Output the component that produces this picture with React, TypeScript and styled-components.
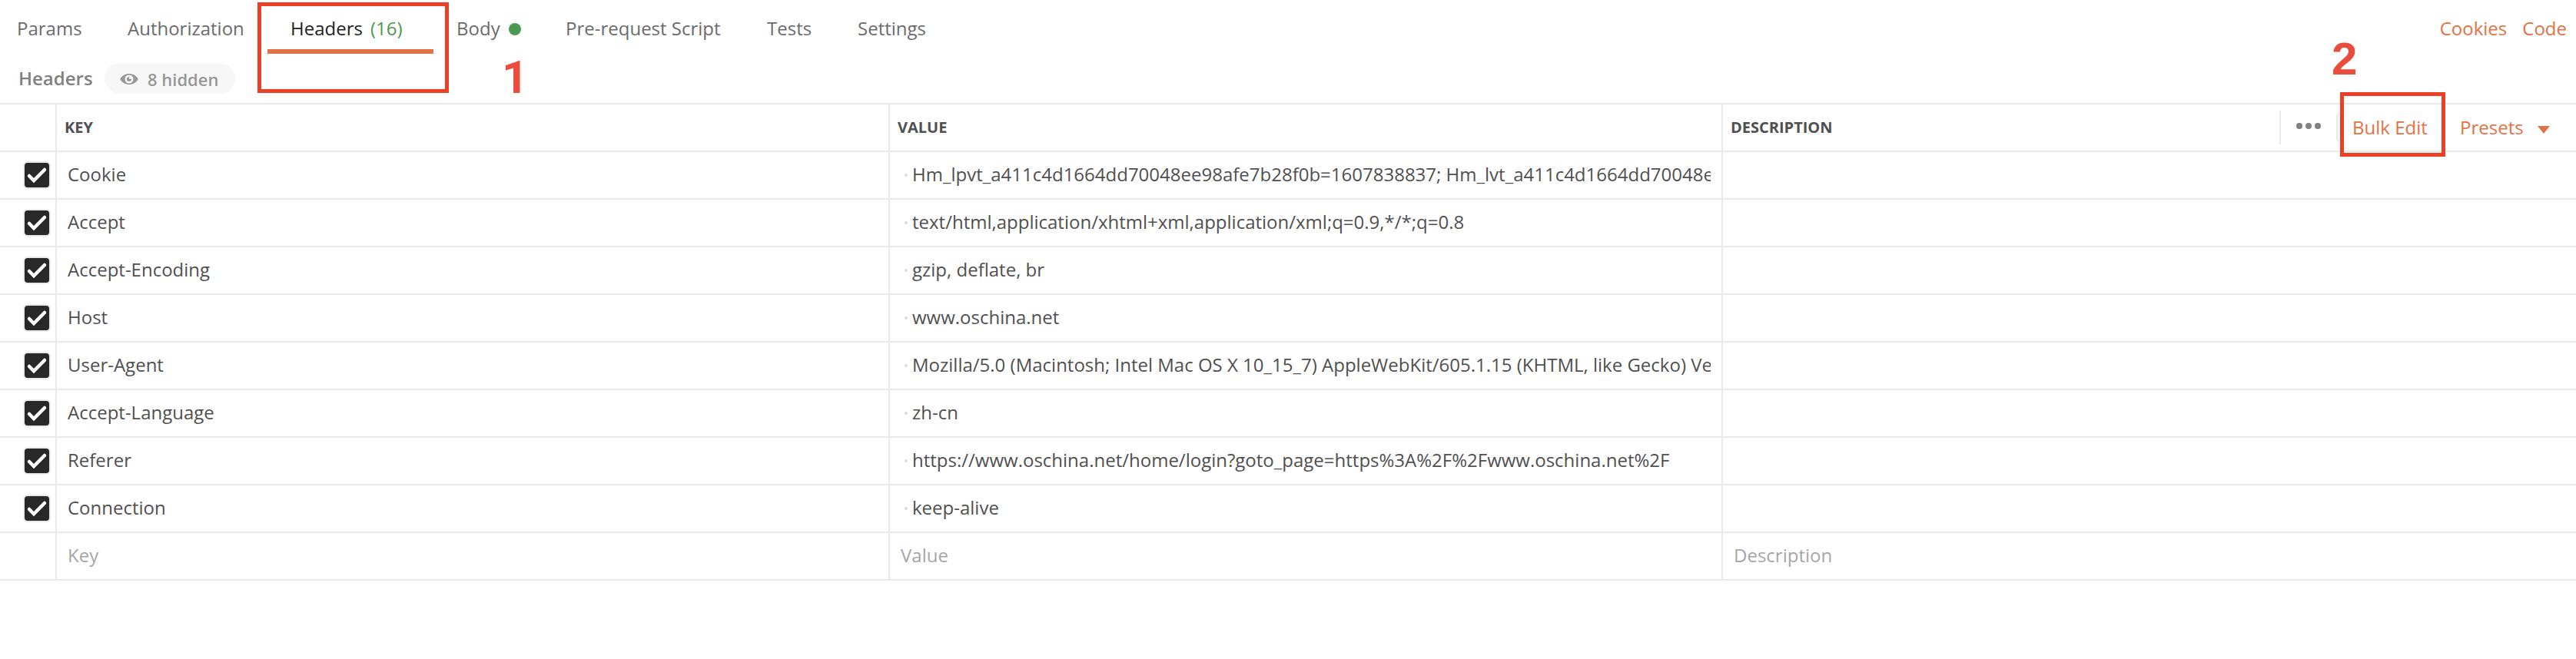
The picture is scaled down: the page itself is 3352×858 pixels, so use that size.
import React from 'react';
import styled, { createGlobalStyle } from 'styled-components';

const LINE = '#e9e9e9';
const ORANGE = '#e27245';

const GlobalStyle = createGlobalStyle`
  *, *::before, *::after { box-sizing: border-box; }
  body {
    margin: 0;
    background: #fff;
    color: #505050;
    font-family: "Open Sans", sans-serif;
    font-size: 24px;
    line-height: 34px;
  }
`;

const Page = styled.main`
  position: relative;
  width: 3352px;
  height: 858px;
  overflow: hidden;
  background: #fff;
`;

const TopBar = styled.nav`
  display: flex;
  justify-content: space-between;
  height: 70px;
`;

const TabList = styled.div`
  display: flex;
  padding-left: 22px;
`;

const Tab = styled.div<{ $width: number; $inset?: number; $active?: boolean }>`
  display: flex;
  width: ${p => p.$width}px;
  height: 70px;
  padding: 20px 0 0 ${p => p.$inset ?? 0}px;
  color: ${p => (p.$active ? '#212121' : '#6b6b6b')};
  border-bottom: 6px solid ${p => (p.$active ? ORANGE : 'transparent')};
  white-space: nowrap;
`;

const Count = styled.span`
  margin-left: 10px;
  color: #4c9a52;
`;

const StatusDot = styled.span`
  width: 16px;
  height: 16px;
  margin: 10px 0 0 11px;
  border-radius: 50%;
  background: #4c9a52;
`;

const TopLinks = styled.div`
  display: flex;
  gap: 20px;
  padding: 20px 12px 0 0;
  color: ${ORANGE};
`;

const SubBar = styled.div`
  display: flex;
  align-items: center;
  height: 64px;
  padding: 0 0 0 24px;
`;

const SubTitle = styled.h2`
  width: 112px;
  margin: 0;
  font-size: 24px;
  font-weight: 600;
  color: #808080;
`;

const HiddenPill = styled.div`
  display: flex;
  align-items: center;
  width: 170px;
  height: 40px;
  padding: 2px 0 0 20px;
  gap: 12px;
  border-radius: 20px;
  background: #f7f7f7;
  color: #979797;
  font-size: 22px;
  font-weight: 600;
  white-space: nowrap;
`;

const Table = styled.section`
  border-top: 2px solid ${LINE};
`;

const Row = styled.div`
  display: grid;
  grid-template-columns: 74px 1084px 1084px 1fr;
  height: 62px;
  border-bottom: 2px solid ${LINE};
`;

const Cell = styled.div<{ $pad?: number; $muted?: boolean; $last?: boolean }>`
  display: flex;
  align-items: center;
  min-width: 0;
  padding: 0 14px 2px ${p => p.$pad ?? 14}px;
  border-right: ${p => (p.$last ? '0' : `2px solid ${LINE}`)};
  color: ${p => (p.$muted ? '#a6a6a6' : '#505050')};
`;

const HeadCell = styled(Cell)`
  padding: 0 0 0 10px;
  font-size: 20px;
  font-weight: 700;
`;

const CheckCell = styled(Cell)`
  padding: 0 0 0 30px;
`;

const Clip = styled.span`
  overflow: hidden;
  white-space: nowrap;
`;

const SpaceMark = styled.span`
  flex: none;
  width: 4px;
  height: 4px;
  margin: 2px 6px 0 0;
  border-radius: 2px;
  background: #dcdcdc;
`;

const Tools = styled.div`
  display: flex;
  align-items: center;
  width: 386px;
  height: 44px;
  margin-left: auto;
  border-left: 2px solid ${LINE};
  color: ${ORANGE};
  font-size: 24px;
  font-weight: 400;
`;

const More = styled.div`
  display: flex;
  gap: 4px;
  width: 72px;
  padding: 0 0 4px 20px;
`;

const MoreDot = styled.span`
  width: 8px;
  height: 8px;
  border-radius: 50%;
  background: #808080;
`;

const ToolButton = styled.div<{ $width: number; $outlined?: boolean }>`
  display: flex;
  align-items: center;
  width: ${p => p.$width}px;
  height: 40px;
  padding-left: 19px;
  border-left: 2px solid ${p => (p.$outlined ? LINE : 'transparent')};
  border-radius: 6px;
  white-space: nowrap;
`;

const Caret = styled.span`
  margin: 6px 0 0 18px;
  border: 8px solid transparent;
  border-top: 10px solid ${ORANGE};
  border-bottom: 0;
`;

const Highlight = styled.div<{ $x: number; $y: number; $w: number; $h: number }>`
  position: absolute;
  left: ${p => p.$x}px;
  top: ${p => p.$y}px;
  width: ${p => p.$w}px;
  height: ${p => p.$h}px;
  border: 5px solid #ed3f25;
`;

const StepNumber = styled.div<{ $x: number; $y: number; $face: string }>`
  position: absolute;
  left: ${p => p.$x}px;
  top: ${p => p.$y}px;
  color: #eb4d3d;
  font: 700 60px/60px "${p => p.$face}", sans-serif;
`;

const EyeIcon = () => (
  <svg width="24" height="14" viewBox="0 0 24 14">
    <path
      fill="#979797"
      fillRule="evenodd"
      d="M0 7C3 2.4 7 0 12 0s9 2.4 12 7c-3 4.6-7 7-12 7S3 11.6 0 7zm12-5.500a5.500 5.500 0 1 0 0 11 5.500 5.500 0 0 0 0-11zm0 2.500v3h3a3 3 0 1 1-3-3z"
    />
  </svg>
);

const CheckBox = () => (
  <svg width="36" height="36" viewBox="0 0 36 36">
    <rect width="36" height="36" rx="6" fill={LINE} />
    <rect x="2" y="2" width="32" height="32" rx="4" fill="#282828" />
    <path d="M8 19l6 6 14-14" fill="none" stroke="#fff" strokeWidth="4.500" strokeLinecap="round" />
  </svg>
);

const headers = [
  ['Cookie', 'Hm_lpvt_a411c4d1664dd70048ee98afe7b28f0b=1607838837; Hm_lvt_a411c4d1664dd70048ee'],
  ['Accept', 'text/html,application/xhtml+xml,application/xml;q=0.9,*/*;q=0.8'],
  ['Accept-Encoding', 'gzip, deflate, br'],
  ['Host', 'www.oschina.net'],
  ['User-Agent', 'Mozilla/5.0 (Macintosh; Intel Mac OS X 10_15_7) AppleWebKit/605.1.15 (KHTML, like Gecko) Ver'],
  ['Accept-Language', 'zh-cn'],
  ['Referer', 'https://www.oschina.net/home/login?goto_page=https%3A%2F%2Fwww.oschina.net%2F'],
  ['Connection', 'keep-alive'],
];

export default function App() {
  return (
    <>
      <GlobalStyle />
      <Page>
        <TopBar>
          <TabList>
            <Tab $width={144}>Params</Tab>
            <Tab $width={182}>Authorization</Tab>
            <Tab $width={216} $inset={30} $active>
              Headers<Count>(16)</Count>
            </Tab>
            <Tab $width={172} $inset={30}>Body<StatusDot /></Tab>
            <Tab $width={262}>Pre-request Script</Tab>
            <Tab $width={118}>Tests</Tab>
            <Tab $width={120}>Settings</Tab>
          </TabList>
          <TopLinks>
            <span>Cookies</span>
            <span>Code</span>
          </TopLinks>
        </TopBar>
        <SubBar>
          <SubTitle>Headers</SubTitle>
          <HiddenPill><EyeIcon />8 hidden</HiddenPill>
        </SubBar>
        <Table>
          <Row>
            <HeadCell />
            <HeadCell>KEY</HeadCell>
            <HeadCell>VALUE</HeadCell>
            <HeadCell $last>
              DESCRIPTION
              <Tools>
                <More><MoreDot /><MoreDot /><MoreDot /></More>
                <ToolButton $width={140} $outlined>Bulk Edit</ToolButton>
                <ToolButton $width={170}>Presets<Caret /></ToolButton>
              </Tools>
            </HeadCell>
          </Row>
          {headers.map(([name, value]) => (
            <Row key={name}>
              <CheckCell><CheckBox /></CheckCell>
              <Cell><Clip>{name}</Clip></Cell>
              <Cell $pad={19}><SpaceMark /><Clip>{value}</Clip></Cell>
              <Cell $last />
            </Row>
          ))}
          <Row>
            <Cell />
            <Cell $muted>Key</Cell>
            <Cell $muted>Value</Cell>
            <Cell $muted $last>Description</Cell>
          </Row>
        </Table>
        <Highlight $x={335} $y={3} $w={249} $h={118} />
        <Highlight $x={3045} $y={120} $w={137} $h={84} />
        <StepNumber $face="Roboto" $x={653} $y={71}>1</StepNumber>
        <StepNumber $face="Liberation Sans" $x={3034} $y={47}>2</StepNumber>
      </Page>
    </>
  );
}
